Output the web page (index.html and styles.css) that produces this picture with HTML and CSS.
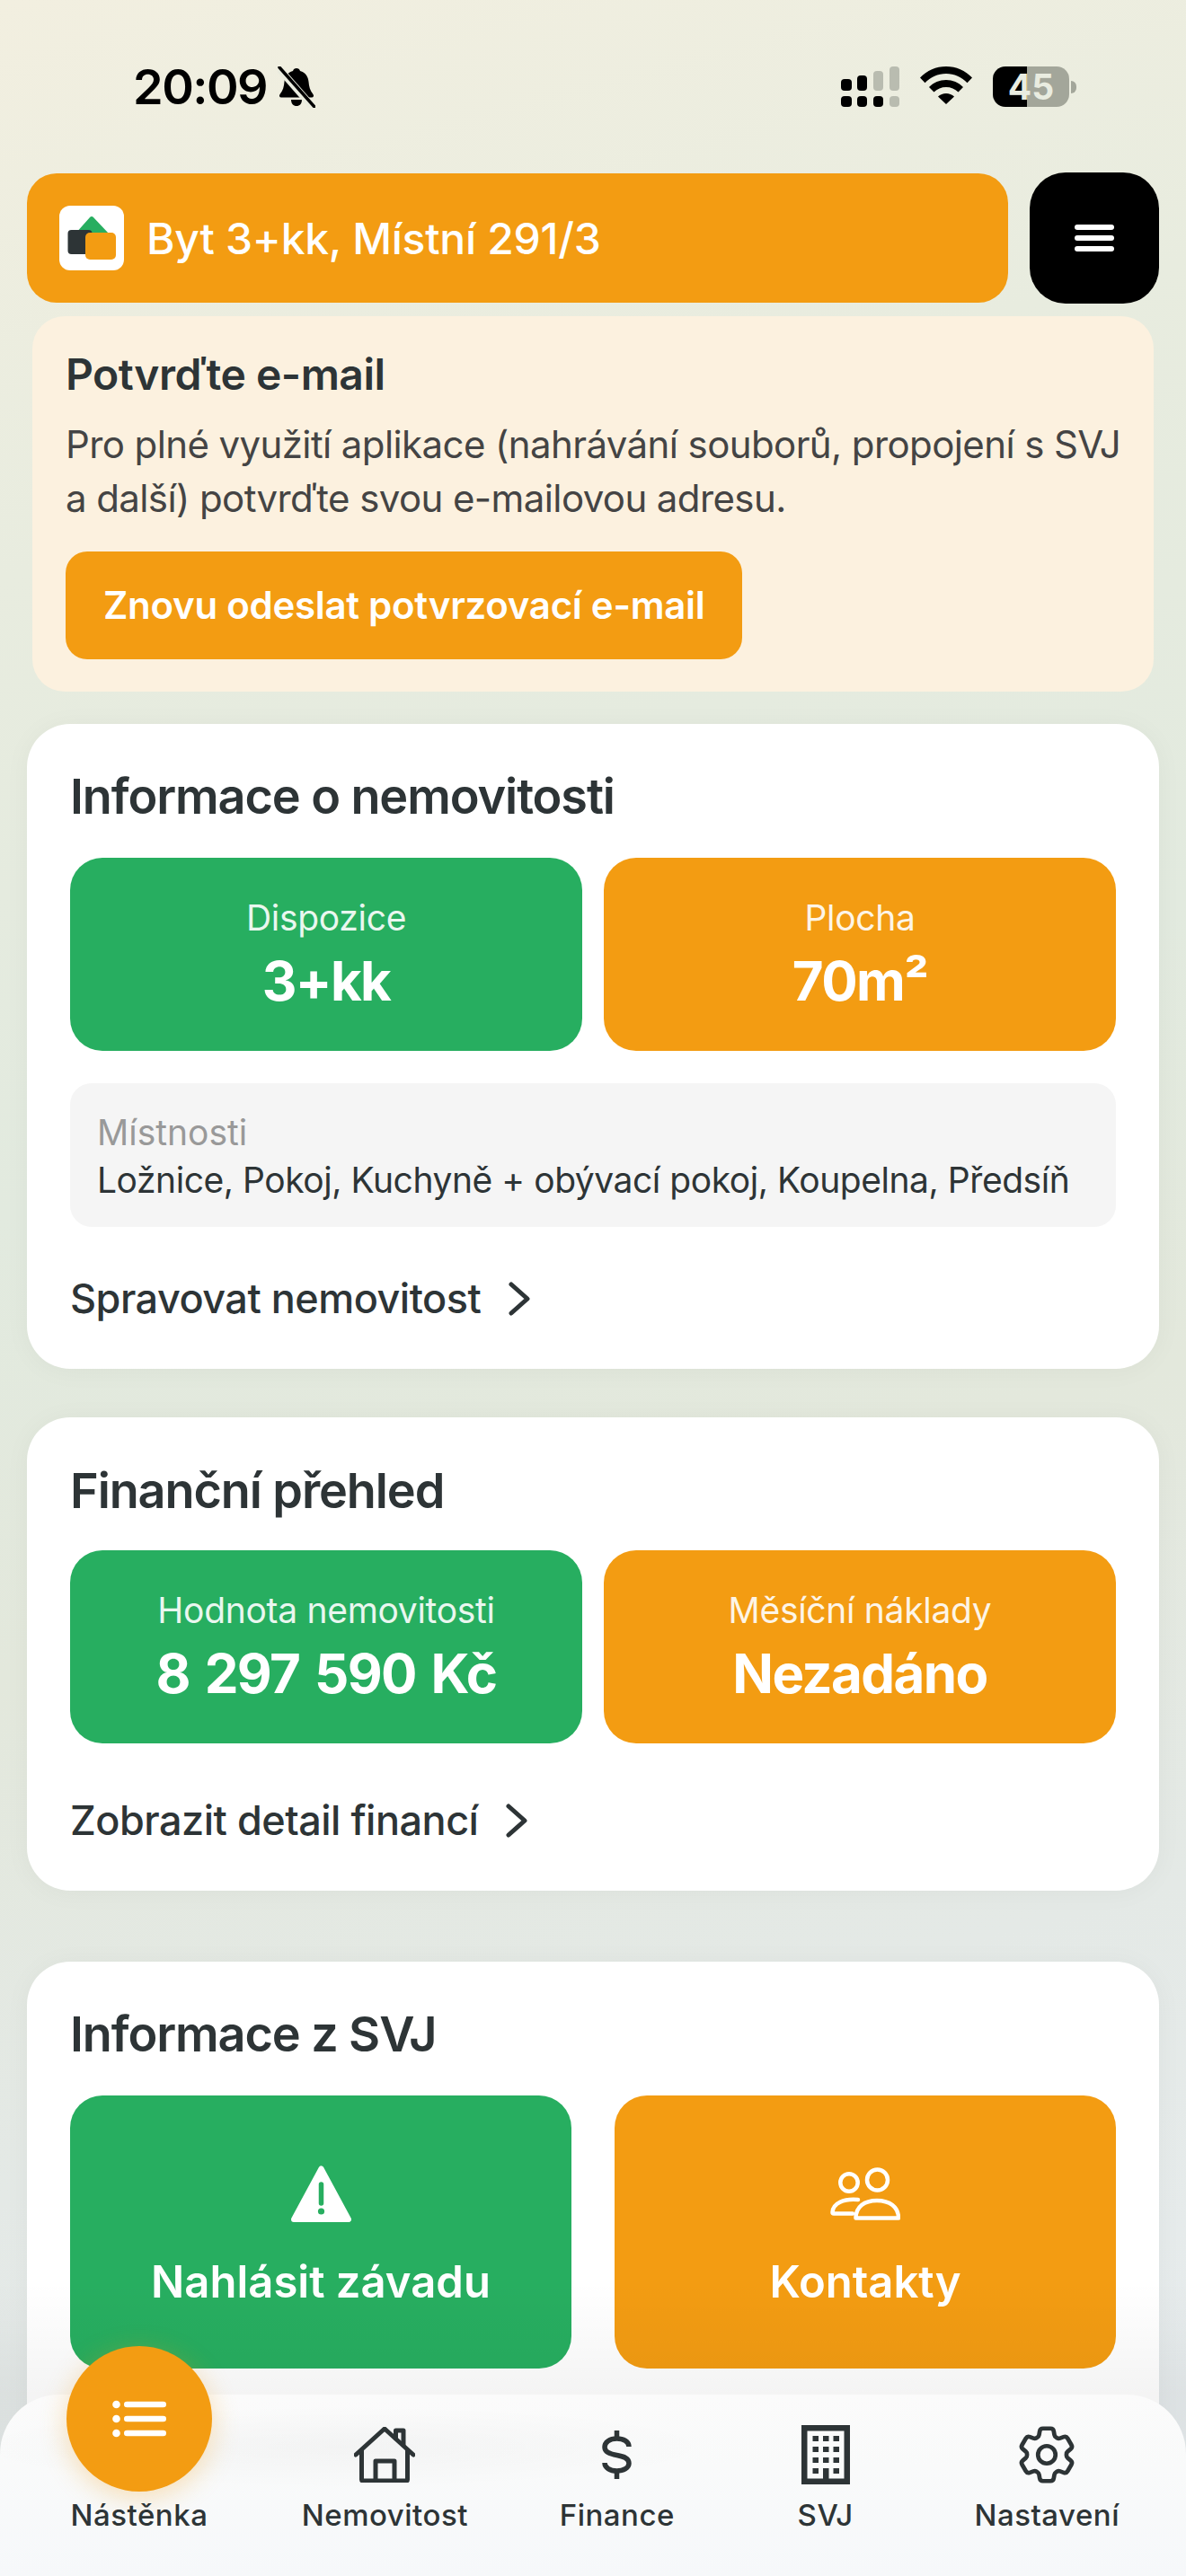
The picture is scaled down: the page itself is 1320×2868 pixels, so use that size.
FILE: index.html
```html
<!DOCTYPE html>
<html lang="cs">
<head>
<meta charset="utf-8">
<title>Nástěnka</title>
<link rel="stylesheet" href="styles.css">
</head>
<body>
<div class="screen">

	<div class="status">
		<div class="status-left">
			<span class="time">20:09</span>
			<svg class="bell" viewBox="0 0 42 46" width="42" height="46">
				<path d="M21 2c2 0 3.500 1.300 4 3 6 1.500 9 6.500 9.500 12 .4 5 1.500 10 5 14 1.200 1.500.4 3.500-1.500 3.500H4c-1.900 0-2.700-2-1.500-3.500 3.500-4 4.600-9 5-14C8 11.500 11 6.500 17 5c.5-1.700 2-3 4-3z" fill="#000"/>
				<path d="M15 37h12c0 4.500-2.500 7-6 7s-6-2.500-6-7z" fill="#000"/>
				<path d="M2 3l36 41" stroke="#eaecdf" stroke-width="8"/>
				<path d="M2 1l39 44" stroke="#000" stroke-width="3.500" stroke-linecap="round"/>
			</svg>
		</div>
		<div class="status-right">
			<svg viewBox="0 0 65 45" width="65" height="45">
				<rect x="0" y="14" width="12" height="13" rx="4" fill="#000"/>
				<rect x="18" y="10" width="11" height="17" rx="4" fill="#000"/>
				<rect x="36" y="5" width="11" height="22" rx="4" fill="#b9bcb0"/>
				<rect x="54" y="0" width="11" height="27" rx="4" fill="#b9bcb0"/>
				<rect x="0" y="33" width="12" height="12" rx="4" fill="#000"/>
				<rect x="18" y="33" width="11" height="12" rx="4" fill="#000"/>
				<rect x="36" y="33" width="11" height="12" rx="4" fill="#000"/>
				<rect x="54" y="33" width="11" height="12" rx="4" fill="#b9bcb0"/>
			</svg>
			<svg viewBox="0 0 58 42" width="58" height="42">
				<path d="M0 12.500C7.500 4.500 18 0 29 0s21.500 4.500 29 12.500l-5.500 5.700C46.500 11.800 38 8 29 8S11.500 11.800 5.500 18.200z" fill="#000"/>
				<path d="M10 23C15 17.800 21.800 15 29 15s14 2.800 19 8l-5.500 5.600C39 25 34.200 23 29 23s-10 2-13.500 5.600z" fill="#000"/>
				<path d="M20 33.500c2.400-2.300 5.600-3.500 9-3.500s6.600 1.200 9 3.500L29 42z" fill="#000"/>
			</svg>
			<div class="battery">
				<div class="battery-body">45</div>
				<div class="battery-nub"></div>
			</div>
		</div>
	</div>

	<div class="topbar">
		<div class="property">
			<svg class="logo" viewBox="0 0 72 72" width="72" height="72">
				<rect width="72" height="72" rx="12" fill="#fff"/>
				<path d="M34 13c1-1.200 3-1.200 4 0l17 18H18z" fill="#27ae60"/>
				<rect x="9.500" y="27" width="27" height="27" rx="4" fill="#2d3436"/>
				<rect x="29" y="30" width="34" height="30" rx="5" fill="#f39c12"/>
			</svg>
			<span class="property-name">Byt 3+kk, Místní 291/3</span>
		</div>
		<div class="menu-btn">
			<span></span><span></span><span></span>
		</div>
	</div>

	<div class="banner">
		<h2 class="banner-title">Potvrďte e-mail</h2>
		<p class="banner-text">Pro plné využití aplikace (nahrávání souborů, propojení s SVJ a další) potvrďte svou e-mailovou adresu.</p>
		<div class="banner-btn">Znovu odeslat potvrzovací e-mail</div>
	</div>

	<div class="card card-property">
		<h2 class="card-title">Informace o nemovitosti</h2>
		<div class="tiles">
			<div class="tile green">
				<div class="tile-label">Dispozice</div>
				<div class="tile-value">3+kk</div>
			</div>
			<div class="tile orange">
				<div class="tile-label">Plocha</div>
				<div class="tile-value">70m²</div>
			</div>
		</div>
		<div class="rooms">
			<div class="rooms-label">Místnosti</div>
			<div class="rooms-value">Ložnice, Pokoj, Kuchyně + obývací pokoj, Koupelna, Předsíň</div>
		</div>
		<div class="link">
			<span>Spravovat nemovitost</span>
			<svg viewBox="0 0 26 38" width="26" height="38"><path d="M4 3l18 16L4 35" fill="none" stroke="#2d3436" stroke-width="5" stroke-linecap="round" stroke-linejoin="round"/></svg>
		</div>
	</div>

	<div class="card card-finance">
		<h2 class="card-title">Finanční přehled</h2>
		<div class="tiles">
			<div class="tile green">
				<div class="tile-label">Hodnota nemovitosti</div>
				<div class="tile-value">8 297 590 Kč</div>
			</div>
			<div class="tile orange">
				<div class="tile-label">Měsíční náklady</div>
				<div class="tile-value">Nezadáno</div>
			</div>
		</div>
		<div class="link">
			<span>Zobrazit detail financí</span>
			<svg viewBox="0 0 26 38" width="26" height="38"><path d="M4 3l18 16L4 35" fill="none" stroke="#2d3436" stroke-width="5" stroke-linecap="round" stroke-linejoin="round"/></svg>
		</div>
	</div>

	<div class="card card-svj">
		<h2 class="card-title">Informace z SVJ</h2>
		<div class="actions">
			<div class="action green">
				<svg class="action-icon" viewBox="0 0 67 63" width="67" height="63">
					<path d="M33.500 3.500L64 60H3z" fill="#fff" stroke="#fff" stroke-width="6" stroke-linejoin="round"/>
					<path d="M33.500 21v21" stroke="#27ae60" stroke-width="5.500" stroke-linecap="round"/>
					<circle cx="33.500" cy="51" r="3.600" fill="#27ae60"/>
				</svg>
				<div class="action-label">Nahlásit závadu</div>
			</div>
			<div class="action orange">
				<svg class="action-icon" viewBox="0 0 78 63" width="78" height="63">
					<g fill="none" stroke="#fff" stroke-width="4.500" stroke-linecap="round" stroke-linejoin="round">
						<circle cx="52.500" cy="16" r="11.500"/>
						<circle cx="21" cy="19" r="9.700"/>
						<path d="M28.500 58.500C28.500 46 38 39 52 39s24 7 24 19.500z"/>
						<path d="M31 38C15 36.500 3 42 2.500 52c0 1 .5 1.500 1.500 1.500h21"/>
					</g>
				</svg>
				<div class="action-label">Kontakty</div>
			</div>
		</div>
	</div>

	<div class="fade"></div>

	<nav class="tabbar">
		<div class="tab">
			<div class="fab">
				<svg viewBox="0 0 60 48" width="60" height="48" fill="#fff">
					<circle cx="4.500" cy="8" r="4.300"/><circle cx="4.500" cy="24" r="4.300"/><circle cx="4.500" cy="40" r="4.300"/>
					<rect x="13" y="4.700" width="47" height="6.600" rx="3.300"/><rect x="13" y="20.700" width="47" height="6.600" rx="3.300"/><rect x="13" y="36.700" width="47" height="6.600" rx="3.300"/>
				</svg>
			</div>
			<div class="tab-label">Nástěnka</div>
		</div>
		<div class="tab">
			<div class="tab-icon">
				<svg viewBox="0 0 68 62" width="68" height="62" fill="none" stroke="#2d3436" stroke-width="5" stroke-linecap="round" stroke-linejoin="round">
					<path d="M2 31L34 2l32 29"/>
					<path d="M8.500 26v32.500c0 1 .6 1.500 1.500 1.500h48c1 0 1.500-.6 1.500-1.500V26"/>
					<path d="M24 60V38h21v22"/>
					<path d="M46.500 12.500V4h8.500v16"/>
				</svg>
			</div>
			<div class="tab-label">Nemovitost</div>
		</div>
		<div class="tab">
			<div class="tab-icon">
				<svg viewBox="0 0 33 54" width="33" height="54" fill="none" stroke="#2d3436" stroke-width="5.500">
					<path d="M16.500 0v9M16.500 45v9"/>
					<path d="M30 18c0-5.500-6-9-13.500-9C8.500 9 3 13 3 18.500 3 24 8 26 16.500 27.500 25 29 30 31 30 36.500 30 41.500 24 45 16.500 45 9 45 3 41.500 3 36"/>
				</svg>
			</div>
			<div class="tab-label">Finance</div>
		</div>
		<div class="tab">
			<div class="tab-icon">
				<svg viewBox="0 0 54 66" width="54" height="66" fill="#2d3436">
					<path d="M0 0h54v66H0zM6.500 6.500v53h41v-53z" fill-rule="evenodd"/>
					<rect x="12.500" y="12" width="6.500" height="6"/><rect x="24" y="12" width="6.500" height="6"/><rect x="35.500" y="12" width="6.500" height="6"/>
					<rect x="12.500" y="24" width="6.500" height="6"/><rect x="24" y="24" width="6.500" height="6"/><rect x="35.500" y="24" width="6.500" height="6"/>
					<rect x="12.500" y="36" width="6.500" height="6"/><rect x="24" y="36" width="6.500" height="6"/><rect x="35.500" y="36" width="6.500" height="6"/>
					<rect x="12.500" y="48" width="6.500" height="6"/><rect x="24" y="48" width="6.500" height="18"/><rect x="35.500" y="48" width="6.500" height="6"/>
				</svg>
			</div>
			<div class="tab-label">SVJ</div>
		</div>
		<div class="tab">
			<div class="tab-icon">
				<svg viewBox="0 0 24 24" width="78" height="78" fill="none" stroke="#2d3436" stroke-width="1.450" stroke-linecap="round" stroke-linejoin="round">
					<path d="M9.594 3.940c.09-.542.56-.94 1.110-.94h2.593c.55 0 1.020.398 1.110.94l.213 1.281c.063.374.313.686.645.870.074.040.147.083.22.127.325.196.72.257 1.075.124l1.217-.456a1.125 1.125 0 0 1 1.370.49l1.296 2.247a1.125 1.125 0 0 1-.26 1.431l-1.003.827c-.293.241-.438.613-.43.992a7.723 7.723 0 0 1 0 .255c-.008.378.137.75.43.991l1.004.827c.424.35.534.955.26 1.430l-1.298 2.247a1.125 1.125 0 0 1-1.369.491l-1.217-.456c-.355-.133-.75-.072-1.076.124a6.470 6.470 0 0 1-.22.128c-.331.183-.581.495-.644.869l-.213 1.281c-.09.543-.56.94-1.110.94h-2.594c-.55 0-1.019-.398-1.110-.94l-.213-1.281c-.062-.374-.312-.686-.644-.87a6.520 6.520 0 0 1-.22-.127c-.325-.196-.72-.257-1.076-.124l-1.217.456a1.125 1.125 0 0 1-1.369-.49l-1.297-2.247a1.125 1.125 0 0 1 .26-1.431l1.004-.827c.292-.24.437-.613.43-.991a6.932 6.932 0 0 1 0-.255c.007-.38-.138-.751-.43-.992l-1.004-.827a1.125 1.125 0 0 1-.26-1.430l1.297-2.247a1.125 1.125 0 0 1 1.370-.491l1.216.456c.356.133.751.072 1.076-.124.072-.044.146-.086.22-.128.332-.183.582-.495.644-.869l.214-1.280z"/>
					<path d="M15 12a3 3 0 1 1-6 0 3 3 0 0 1 6 0z"/>
				</svg>
			</div>
			<div class="tab-label">Nastavení</div>
		</div>
	</nav>

</div>
</body>
</html>
```

FILE: styles.css
```css
html, body { margin: 0; padding: 0; }

body {
	font-family: Inter, "Noto Sans", sans-serif;
	color: #2d3436;
}

h2, p { margin: 0; }

.screen {
	position: relative;
	width: 1320px;
	height: 2868px;
	overflow: hidden;
	background: linear-gradient(165deg, #f2efe0 0, #e8ecdf 20%, #e2eadf 42%, #e3e8dc 58%, #e4e9e6 76%, #e8edf0 100%);
}

/* status bar */
.status {
	display: flex;
	justify-content: space-between;
	height: 192px;
	box-sizing: border-box;
	padding: 74px 122px 0 148px;
}
.status-left { display: flex; align-items: center; gap: 12px; height: 46px; }
.status-right { display: flex; align-items: flex-start; gap: 23px; }
.time { font-size: 54px; line-height: 46px; font-weight: 600; letter-spacing: -1.5px; color: #000; }
.bell { display: block; }

.battery { display: flex; align-items: center; gap: 2px; height: 45px; }
.battery-body {
	width: 85px;
	height: 45px;
	border-radius: 14px;
	background: linear-gradient(90deg, #000 45%, #a3a69a 45%);
	color: #e9ece0;
	font-size: 39px;
	line-height: 45px;
	font-weight: 700;
	text-align: center;
}
.battery-nub { width: 6px; height: 14px; border-radius: 0 7px 7px 0; background: #a3a69a; }

/* top bar */
.topbar {
	display: flex;
	align-items: center;
	gap: 24px;
	padding: 0 30px;
}
.property {
	flex: 1;
	display: flex;
	align-items: center;
	gap: 25px;
	height: 144px;
	padding: 0 36px;
	background: #f39c12;
	border-radius: 33px;
}
.logo { display: block; }
.property-name { color: #fff; font-size: 48px; font-weight: 500; letter-spacing: -0.25px; }

.menu-btn {
	width: 144px;
	height: 146px;
	background: #000;
	border-radius: 40px;
	display: flex;
	flex-direction: column;
	align-items: center;
	justify-content: center;
	gap: 6.500px;
}
.menu-btn span { width: 44px; height: 5.500px; border-radius: 3px; background: #fff; }

/* e-mail banner */
.banner {
	margin: 14px 36px 0;
	height: 418px;
	box-sizing: border-box;
	padding: 36px 28px 36px 37px;
	background: #fcf1df;
	border-radius: 36px;
}
.banner-title { font-size: 48px; line-height: 58px; font-weight: 600; letter-spacing: -0.5px; }
.banner-text { margin-top: 19px; font-size: 42px; line-height: 60px; letter-spacing: -0.6px; color: #444; }
.banner-btn {
	display: inline-block;
	margin-top: 29px;
	padding: 0 42px;
	height: 120px;
	line-height: 120px;
	background: #f39c12;
	border-radius: 24px;
	color: #fff;
	font-size: 42px;
	font-weight: 600;
	letter-spacing: -0.28px;
}

/* cards */
.card {
	margin: 0 30px;
	padding: 48px 48px 50px;
	background: #fff;
	border-radius: 48px;
	box-shadow: 0 2px 30px rgba(0, 0, 0, 0.04);
}
.card-property { margin-top: 36px; }
.card-finance { margin-top: 54px; padding-top: 49px; }
.card-svj { margin-top: 79px; padding-bottom: 300px; }

.card-title { font-size: 54px; line-height: 66px; font-weight: 600; letter-spacing: -1.1px; margin-bottom: 35px; }
.card-finance .card-title { margin-bottom: 33px; }

.tiles { display: grid; grid-template-columns: 1fr 1fr; gap: 24px; }
.tile {
	height: 215px;
	box-sizing: border-box;
	padding-top: 2px;
	border-radius: 36px;
	color: #fff;
	display: flex;
	flex-direction: column;
	align-items: center;
	justify-content: center;
	gap: 9px;
}
.green { background: #27ae60; }
.orange { background: #f39c12; }
.tile-label { font-size: 39px; line-height: 48px; letter-spacing: -0.3px; opacity: 0.9; }
.tile-value { font-size: 60px; line-height: 74px; font-weight: 700; letter-spacing: -1.6px; word-spacing: 4px; }

.rooms {
	margin-top: 36px;
	height: 160px;
	box-sizing: border-box;
	padding: 30px;
	background: #f5f5f5;
	border-radius: 24px;
}
.rooms-label { font-size: 39px; line-height: 50px; color: #999; }
.rooms-value { margin-top: 3px; font-size: 39px; line-height: 50px; letter-spacing: -0.45px; white-space: nowrap; }

.link {
	display: flex;
	align-items: center;
	gap: 30px;
	margin-top: 52px;
	font-size: 45px;
	line-height: 56px;
	font-weight: 500;
	letter-spacing: -0.5px;
}
.card-finance .link { margin-top: 58px; }

.actions { display: grid; grid-template-columns: 1fr 1fr; gap: 48px; }
.action {
	height: 304px;
	box-sizing: border-box;
	padding-top: 78px;
	border-radius: 36px;
	color: #fff;
	display: flex;
	flex-direction: column;
	align-items: center;
}
.action-icon { display: block; }
.action-label { margin-top: 37px; font-size: 49px; line-height: 60px; font-weight: 600; }

/* bottom */
.fade {
	position: absolute;
	left: 0;
	right: 0;
	top: 2540px;
	bottom: 0;
	background: linear-gradient(180deg, rgba(0, 0, 0, 0) 0, rgba(0, 0, 0, 0.045) 38%, rgba(0, 0, 0, 0.045) 100%);
}

.tabbar {
	position: absolute;
	left: 0;
	right: 0;
	bottom: 0;
	height: 202px;
	box-sizing: border-box;
	padding: 0 74px;
	display: flex;
	justify-content: space-between;
	border-radius: 66px 66px 0 0;
	background:
		radial-gradient(ellipse 420px 46px at 380px 58px, rgba(0, 0, 0, 0.028), rgba(0, 0, 0, 0)),
		linear-gradient(180deg, #fbfbfb 0, #f9fafa 40%, #f6f8fa 100%);
}
.tab {
	min-width: 132px;
	padding-top: 30px;
	display: flex;
	flex-direction: column;
	align-items: center;
}
.tab-icon {
	height: 74px;
	margin-bottom: 10px;
	display: flex;
	align-items: center;
	justify-content: center;
}
.tab-label { font-size: 33px; line-height: 40px; font-weight: 500; letter-spacing: 0.5px; white-space: nowrap; }
.fab {
	width: 162px;
	height: 162px;
	margin: -84px 0 6px;
	border-radius: 50%;
	background: #f39c12;
	box-shadow: 0 6px 30px rgba(243, 156, 18, 0.3);
	display: flex;
	align-items: center;
	justify-content: center;
}
```
